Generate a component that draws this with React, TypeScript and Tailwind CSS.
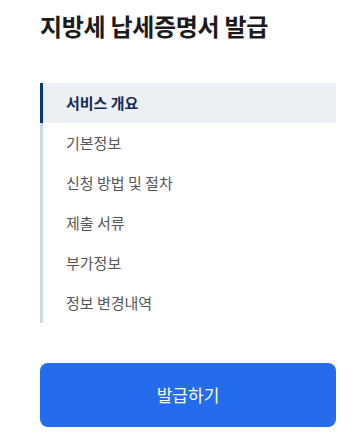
import React from 'react';

const items = ['서비스 개요', '기본정보', '신청 방법 및 절차', '제출 서류', '부가정보', '정보 변경내역'];

const App: React.FC = () => {
  return (
    <div
      className="w-[358px] h-[442px] bg-white px-[40px] pt-[9px]"
      style={{ fontFamily: '"Noto Sans CJK KR", "Noto Sans", sans-serif' }}
    >
      <h1 className="text-[24px] leading-[34px] font-bold text-[#1b1b1b] tracking-[-0.3px]">지방세 납세증명서 발급</h1>

      <nav className="mt-[40px] w-[296px]">
        {items.map((label, i) => (
          <div
            key={label}
            className={
              i === 0
                ? 'h-[40px] flex items-center pl-[23px] border-l-[3px] border-[#0b3878] bg-[#ecf0f5] text-[15px] font-bold text-[#142c55]'
                : 'h-[40px] flex items-center pl-[23px] border-l-[3px] border-[#cdd8e6] text-[15px] text-[#555555]'
            }
          >
            {label}
          </div>
        ))}
      </nav>

      <button className="mt-[40px] w-[296px] h-[64px] rounded-[8px] bg-[#256ced] text-white text-[17px] flex items-center justify-center">
        발급하기
      </button>
    </div>
  );
};

export default App;
